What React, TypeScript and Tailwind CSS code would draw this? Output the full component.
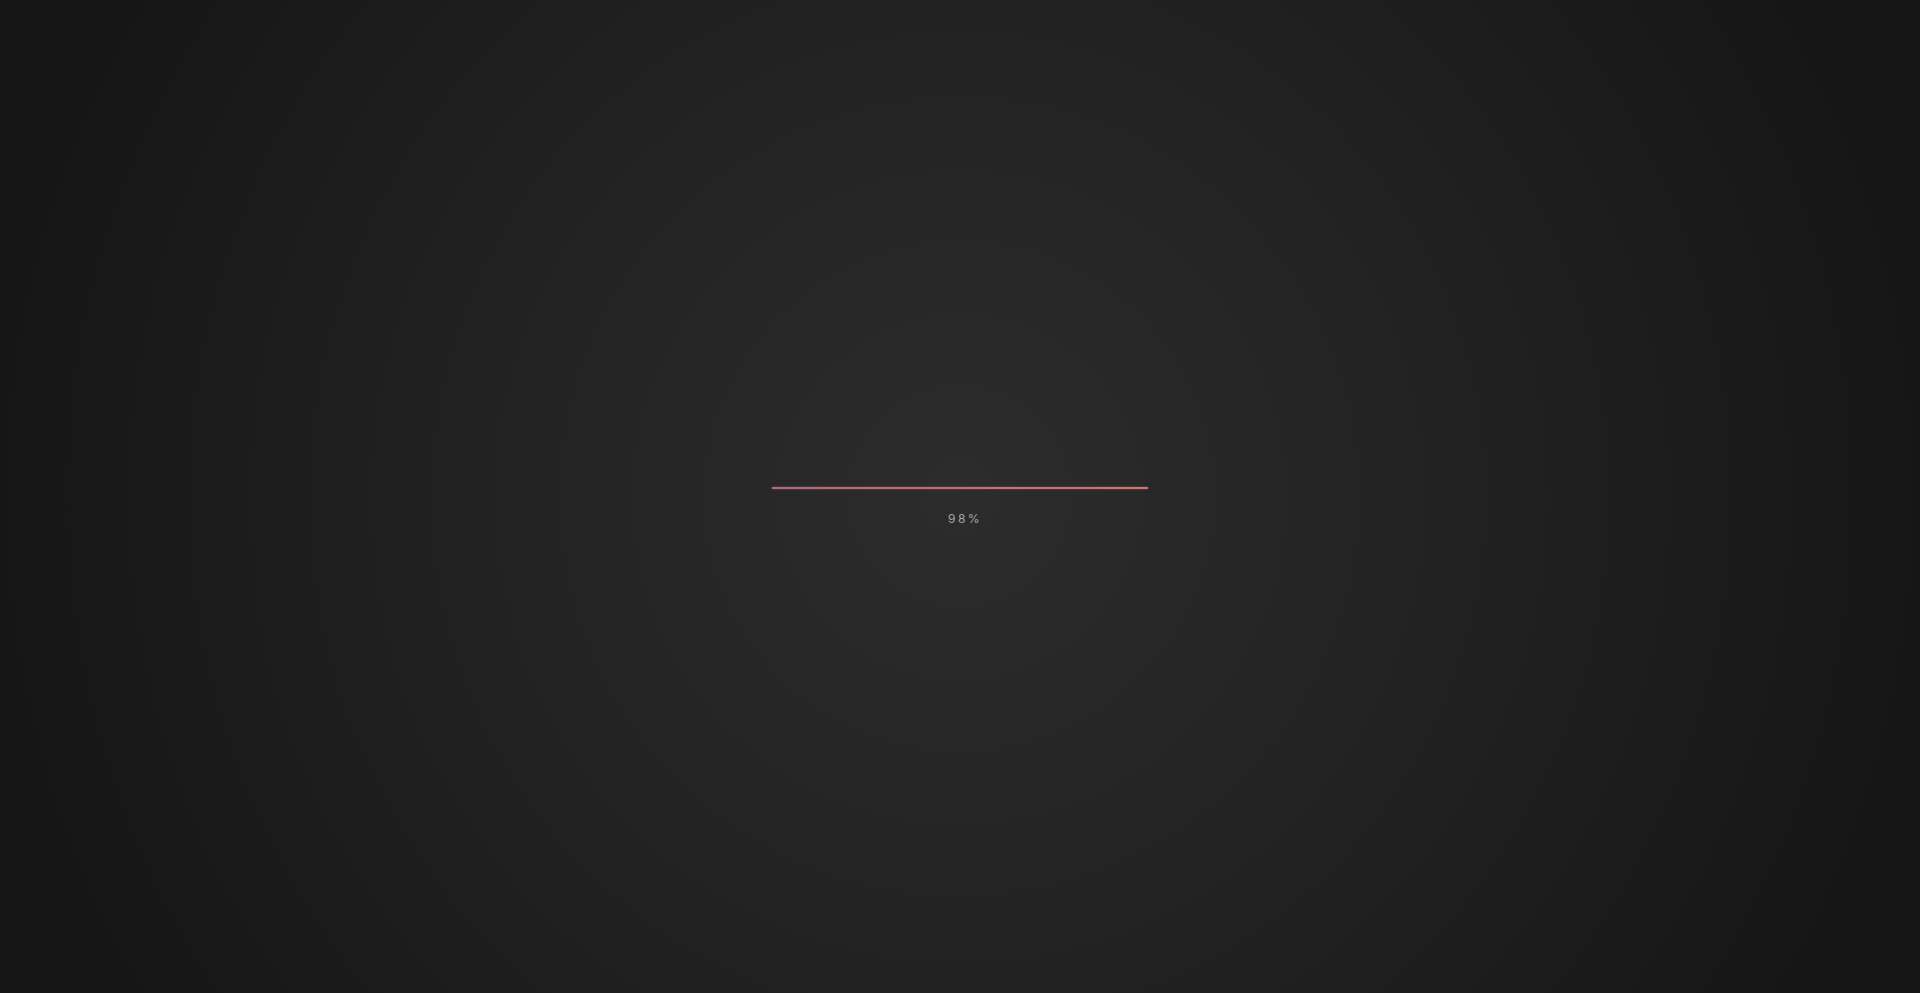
import React from "react"

export default function App() {
  const progress = 98

  return (
    <div className="flex h-[993px] w-full items-center justify-center bg-[radial-gradient(circle_farthest-side_at_50%_50%,#2c2c2c_0%,#232323_45%,#161616_100%)] pt-[19px] font-['Inter','Noto_Sans',sans-serif]">
      <div className="flex w-[376px] flex-col items-center">
        {/* 进度条 */}
        <div className="h-[2px] w-full">
          <div className="h-full w-full bg-gradient-to-r from-[#b46a7a] via-[#c8706f] to-[#d4786c] shadow-[0_0_3px_rgba(190,100,130,0.4)]" />
        </div>
        <span className="mt-[24px] pl-[10px] text-[12px] leading-none tracking-[0.2em] text-[#a8a8a8]">
          {progress}%
        </span>
      </div>
    </div>
  )
}
